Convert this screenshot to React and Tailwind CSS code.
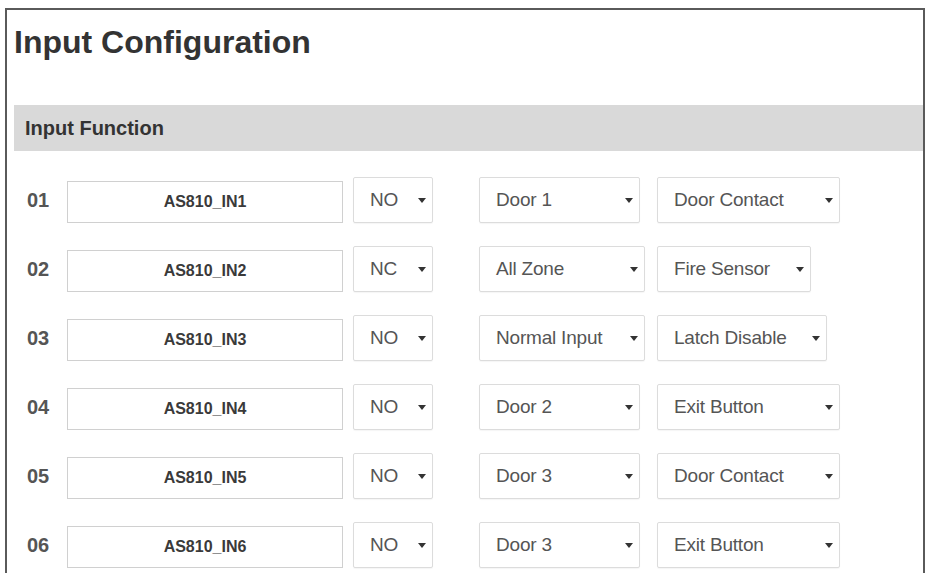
const inputs = [
  { no: "01", name: "AS810_IN1", mode: "NO", zone: "Door 1", zoneW: "w-[161px]", func: "Door Contact", funcW: "w-[183px]" },
  { no: "02", name: "AS810_IN2", mode: "NC", zone: "All Zone", zoneW: "w-[166px]", func: "Fire Sensor", funcW: "w-[154px]" },
  { no: "03", name: "AS810_IN3", mode: "NO", zone: "Normal Input", zoneW: "w-[166px]", func: "Latch Disable", funcW: "w-[170px]" },
  { no: "04", name: "AS810_IN4", mode: "NO", zone: "Door 2", zoneW: "w-[161px]", func: "Exit Button", funcW: "w-[183px]" },
  { no: "05", name: "AS810_IN5", mode: "NO", zone: "Door 3", zoneW: "w-[161px]", func: "Door Contact", funcW: "w-[183px]" },
  { no: "06", name: "AS810_IN6", mode: "NO", zone: "Door 3", zoneW: "w-[161px]", func: "Exit Button", funcW: "w-[183px]" },
];

const Caret = () => (
  <svg width="8" height="5" viewBox="0 0 8 5" className="shrink-0">
    <path d="M0 0h8L4 5z" fill="#333" />
  </svg>
);

const Select = ({ value, className }) => (
  <div
    className={`flex h-[46px] items-center justify-between rounded-[2px] border border-[#dcdcdc] bg-white pl-4 pr-[6px] text-[19px] tracking-[-0.2px] text-[#555] shadow-[0_1px_1px_rgba(0,0,0,0.04)] ${className}`}
  >
    <span>{value}</span>
    <Caret />
  </div>
);

const InputRow = ({ row }) => (
  <div className="flex items-end">
    <div className="w-10 self-center text-[20px] font-bold leading-none text-[#555]">{row.no}</div>
    <div className="flex h-[42px] w-[276px] items-center justify-center border border-[#d0d0d0] bg-white text-[16px] font-bold text-[#3a3a3a]">
      {row.name}
    </div>
    <Select value={row.mode} className="ml-[10px] w-[80px]" />
    <div className="ml-[46px] w-[178px]">
      <Select value={row.zone} className={row.zoneW} />
    </div>
    <Select value={row.func} className={row.funcW} />
  </div>
);

export default function App() {
  return (
    <div className="h-[573px] overflow-hidden bg-white font-['Liberation_Sans',Arial,sans-serif]">
      <div className="ml-[5px] mt-[8px] h-[600px] w-[920px] border-x-2 border-t-2 border-[#5a5a5a] pl-[7px]">
        <h1 className="pt-[14px] text-[32px] font-bold leading-[37px] text-[#333]">Input Configuration</h1>
        <div className="mt-[44px] flex h-[46px] items-center bg-[#d9d9d9] pl-[11px] text-[20px] font-bold text-[#333]">
          Input Function
        </div>
        <div className="mt-[26px] flex flex-col gap-[23px] pl-[13px]">
          {inputs.map((row) => (
            <InputRow key={row.no} row={row} />
          ))}
        </div>
      </div>
    </div>
  );
}
